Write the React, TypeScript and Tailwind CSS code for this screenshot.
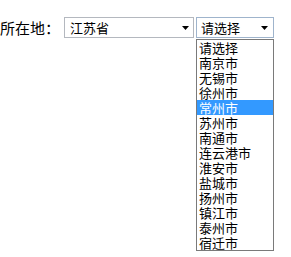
import React from "react";

const cities = ["请选择","南京市","无锡市","徐州市","常州市","苏州市","南通市","连云港市","淮安市","盐城市","扬州市","镇江市","泰州市","宿迁市"];

function Arrow() {
  return (
    <svg width="7" height="4" viewBox="0 0 7 4" className="shrink-0">
      <path d="M0 0H7L3.5 4Z" fill="#000" />
    </svg>
  );
}

export default function App() {
  return (
    <div className="w-[291px] h-[257px] bg-white" style={{ fontFamily: '"Noto Sans CJK SC", sans-serif' }}>
      <div className="flex items-start pt-[17px]">
        <div className="h-[21px] flex items-center text-[15px] leading-none text-black w-[64px]">所在地：</div>
        <div className="w-[130px] h-[21px] border border-[#b4b8bf] flex items-center justify-between pl-[5px] pr-[4px] text-[13px] leading-none text-black">
          <span>江苏省</span>
          <Arrow />
        </div>
        <div className="ml-[2px] flex flex-col w-[78px]">
          <div className="h-[21px] border border-[#9fb4cc] flex items-center justify-between pl-[4px] pr-[5px] text-[13px] leading-none text-black">
            <span>请选择</span>
            <Arrow />
          </div>
          <div className="mt-[1px] border border-[#7a7a7a] flex flex-col">
            {cities.map((c, i) => (
              <div
                key={c}
                className={
                  "h-[15px] pl-[2px] text-[13px] leading-[15px] " +
                  (i === 4 ? "bg-[#3399ff] text-white" : "text-black")
                }
              >
                {c}
              </div>
            ))}
          </div>
        </div>
      </div>
    </div>
  );
}
